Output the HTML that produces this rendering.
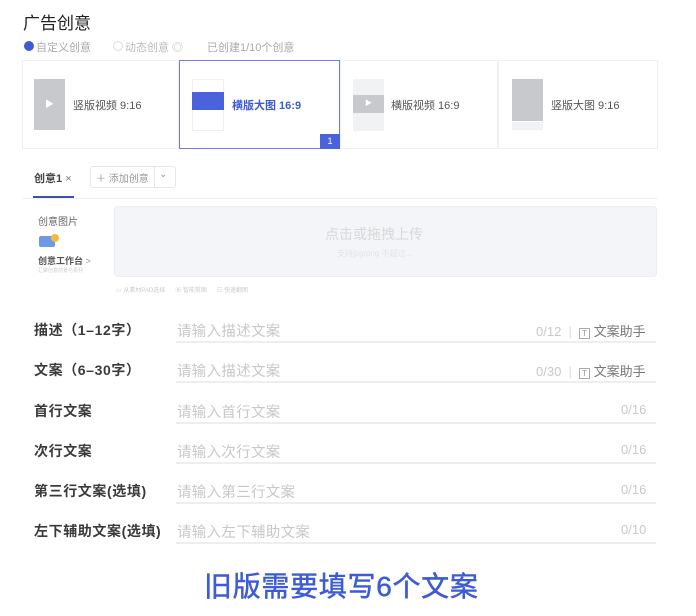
<!DOCTYPE html>
<html><head><meta charset="utf-8"><style>
*{margin:0;padding:0;box-sizing:border-box}
body{width:696px;height:616px;background:#fff;font-family:"Liberation Sans","Noto Sans CJK SC",sans-serif;position:relative;overflow:hidden;color:#333}
.a{position:absolute;white-space:nowrap}
.card{position:absolute;top:60px;height:89px;border:1px solid #eef0f3;background:#fff}
.lbl{position:absolute;left:34px;font-size:14px;font-weight:bold;color:#3a3a3a;letter-spacing:0.6px}
.ph{position:absolute;left:177px;font-size:14.5px;color:#c8c8c8;letter-spacing:0.3px}
.ln{position:absolute;left:176px;width:480px;height:2px;background:#eceef1}
.cnt{position:absolute;font-size:13px;color:#c8c8c8}
</style></head><body>
<div class="a" style="left:23px;top:9px;font-size:17px;color:#222">广告创意</div>
<div class="a" style="left:24px;top:41px;width:10px;height:10px;border-radius:50%;background:#3d5bd6"></div>
<div class="a" style="left:36px;top:39px;font-size:11px;color:#aaa">自定义创意</div>
<div class="a" style="left:113px;top:41px;width:10px;height:10px;border-radius:50%;border:1px solid #ddd"></div>
<div class="a" style="left:125px;top:39px;font-size:11px;color:#bbb">动态创意 ◎</div>
<div class="a" style="left:207px;top:39px;font-size:11px;color:#aaa">已创建1/10个创意</div>

<div class="card" style="left:22px;width:157px">
<div class="a" style="left:11px;top:18px;width:31px;height:51px;background:#c8c9cc;color:#fff;font-size:9px;text-align:center;line-height:51px">▶</div>
<div class="a" style="left:50px;top:36px;font-size:11px;color:#555">竖版视频 9:16</div></div>
<div class="card" style="left:179px;width:161px;border-color:#6b7fe0">
<div class="a" style="left:12px;top:18px;width:32px;height:52px;border:1px solid #f0f0f0"></div>
<div class="a" style="left:12px;top:31px;width:32px;height:18px;background:#4a63dc"></div>
<div class="a" style="left:52px;top:36px;font-size:11px;color:#3d5bd6;font-weight:bold">横版大图 16:9</div>
<div class="a" style="left:140px;top:73px;width:20px;height:15px;background:#4a63dc;color:#fff;font-size:9px;text-align:center;line-height:15px">1</div></div>
<div class="card" style="left:340px;width:158px">
<div class="a" style="left:12px;top:18px;width:31px;height:52px;background:#f1f2f4"></div>
<div class="a" style="left:12px;top:34px;width:31px;height:18px;background:#c8c9cc;color:#fff;font-size:7px;text-align:center;line-height:18px">▶</div>
<div class="a" style="left:50px;top:36px;font-size:11px;color:#555">横版视频 16:9</div></div>
<div class="card" style="left:498px;width:160px">
<div class="a" style="left:13px;top:18px;width:31px;height:42px;background:#c8c9cc"></div>
<div class="a" style="left:13px;top:61px;width:31px;height:8px;background:#f1f2f4"></div>
<div class="a" style="left:52px;top:36px;font-size:11px;color:#555">竖版大图 9:16</div></div>

<div class="a" style="left:34px;top:170px;font-size:11px;font-weight:bold;color:#444">创意1 <span style="font-weight:normal;color:#777">×</span></div>
<div class="a" style="left:33px;top:196px;width:41px;height:3px;background:#3d4fb0"></div>
<div class="a" style="left:22px;top:198px;width:636px;height:1px;background:#f0f0f0"></div>
<div class="a" style="left:90px;top:166px;width:86px;height:22px;border:1px solid #e6e6e6;border-radius:3px"></div>
<div class="a" style="left:154px;top:166px;width:1px;height:22px;background:#e6e6e6"></div>
<div class="a" style="left:96px;top:170px;font-size:10px;color:#999">＋ 添加创意</div>
<div class="a" style="left:159px;top:169px;font-size:10px;color:#999">⌄</div>

<div class="a" style="left:38px;top:213px;font-size:10px;color:#666">创意图片</div>
<div class="a" style="left:39px;top:236px;width:16px;height:11px;background:#6a9ae8;border-radius:2px"></div>
<div class="a" style="left:51px;top:234px;width:8px;height:8px;background:#f5b83d;border-radius:50%"></div>
<div class="a" style="left:38px;top:254px;font-size:9px;color:#555;font-weight:bold">创意工作台 <span style="font-weight:normal;color:#999">&gt;</span></div>
<div class="a" style="left:38px;top:267px;font-size:5px;color:#ccc">汇聚创意前景与素材</div>
<div class="a" style="left:114px;top:206px;width:543px;height:71px;background:#f4f5f8;border:1px solid #eceef2;border-radius:4px"></div>
<div class="a" style="left:325px;top:224px;font-size:14px;color:#d8d8d8">点击或拖拽上传</div>
<div class="a" style="left:337px;top:248px;font-size:8px;color:#e4e4e4">支持jpg/png 不超过...</div>
<div class="a" style="left:116px;top:285px;font-size:6px;color:#ccc">▭ 从素材PAD选择 &nbsp;&nbsp;&nbsp;&nbsp; ▣ 智能剪图 &nbsp;&nbsp;&nbsp;&nbsp; ☷ 快速翻图</div>

<div class="lbl" style="top:320px">描述（1–12字）</div><div class="ph" style="top:320px">请输入描述文案</div><div class="ln" style="top:341px"></div>
<div class="cnt" style="left:536px;top:321px">0/12 &nbsp;<span style="color:#ddd">|</span>&nbsp; <span style="color:#999;border:1px solid #aaa;font-size:8px;padding:0 2px">T</span> <span style="color:#777">文案助手</span></div>
<div class="lbl" style="top:360px">文案（6–30字）</div><div class="ph" style="top:360px">请输入描述文案</div><div class="ln" style="top:381px"></div>
<div class="cnt" style="left:536px;top:361px">0/30 &nbsp;<span style="color:#ddd">|</span>&nbsp; <span style="color:#999;border:1px solid #aaa;font-size:8px;padding:0 2px">T</span> <span style="color:#777">文案助手</span></div>
<div class="lbl" style="top:401px">首行文案</div><div class="ph" style="top:401px">请输入首行文案</div><div class="ln" style="top:422px"></div><div class="cnt" style="left:621px;top:402px">0/16</div>
<div class="lbl" style="top:441px">次行文案</div><div class="ph" style="top:441px">请输入次行文案</div><div class="ln" style="top:462px"></div><div class="cnt" style="left:621px;top:442px">0/16</div>
<div class="lbl" style="top:481px">第三行文案(选填)</div><div class="ph" style="top:481px">请输入第三行文案</div><div class="ln" style="top:502px"></div><div class="cnt" style="left:621px;top:482px">0/16</div>
<div class="lbl" style="top:521px">左下辅助文案(选填)</div><div class="ph" style="top:521px">请输入左下辅助文案</div><div class="ln" style="top:542px"></div><div class="cnt" style="left:621px;top:522px">0/10</div>

<div class="a" style="left:204px;top:565px;font-size:28px;color:#3d5bd6;letter-spacing:0.7px;-webkit-text-stroke:0.5px #3d5bd6">旧版需要填写6个文案</div>
</body></html>
